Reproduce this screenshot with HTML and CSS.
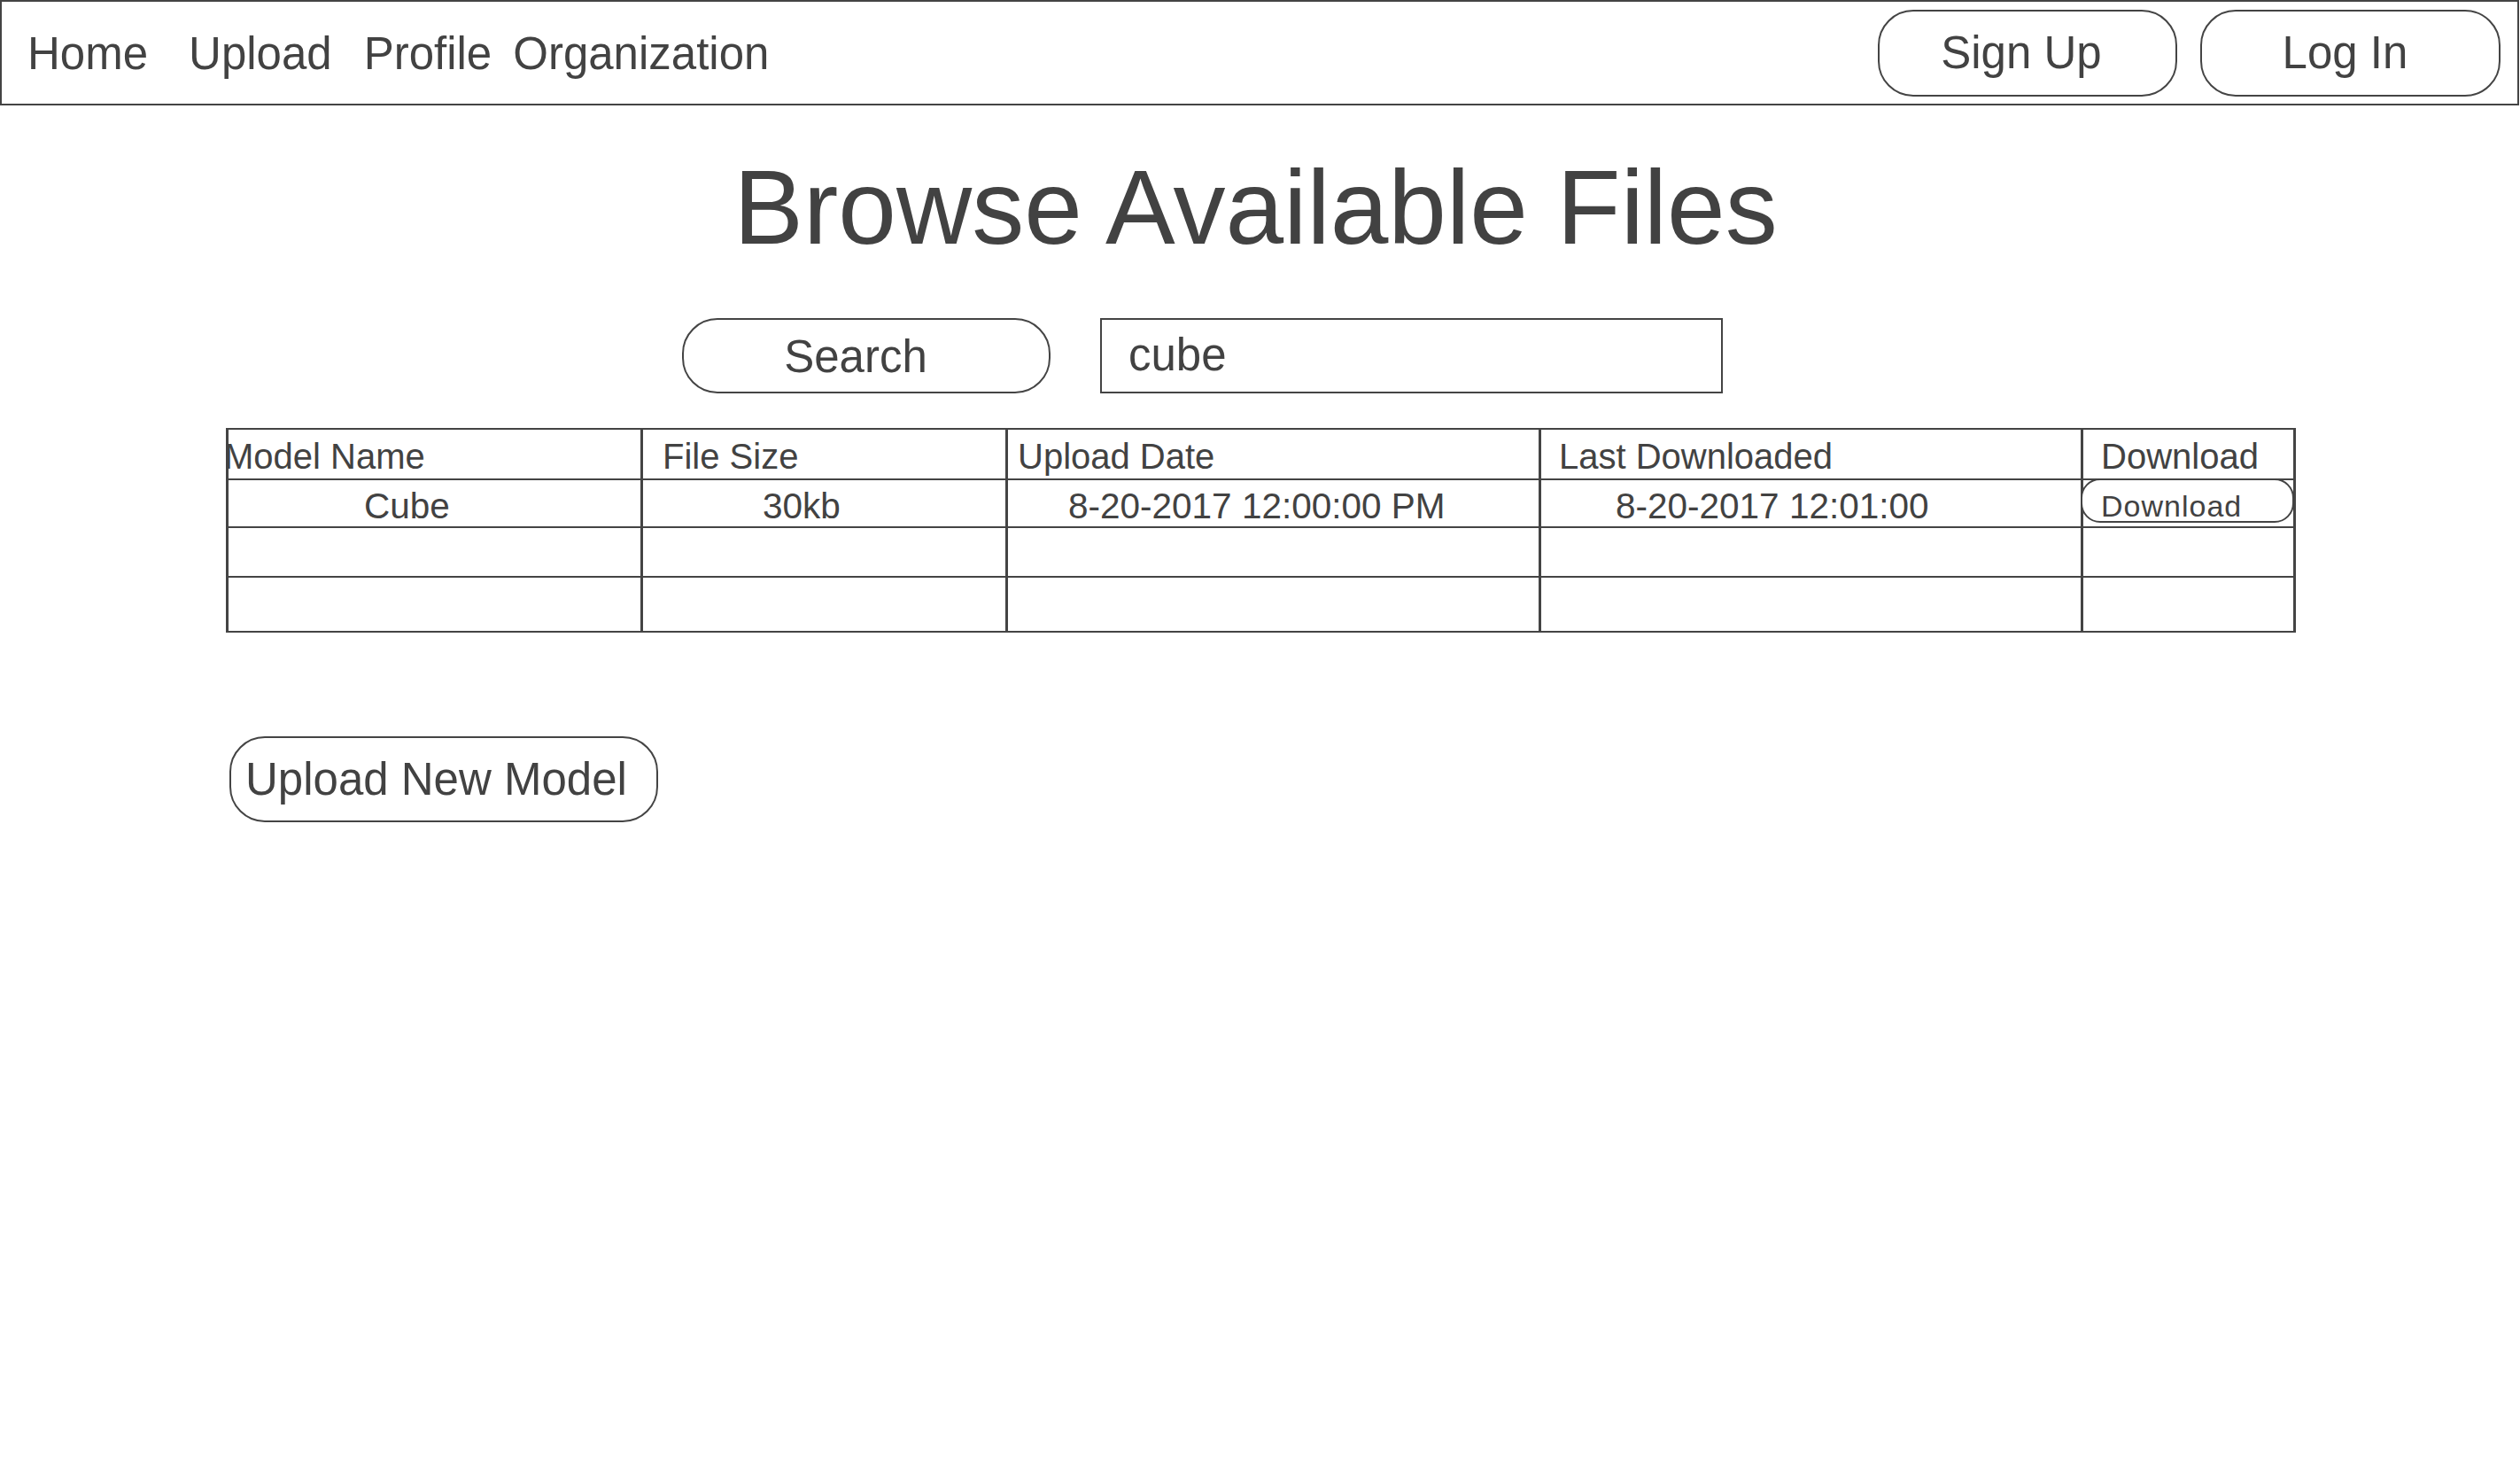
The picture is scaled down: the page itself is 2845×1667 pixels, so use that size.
FILE: index.html
```html
<!DOCTYPE html>
<html lang="en">
<head>
<meta charset="utf-8">
<title>Browse Available Files</title>
<link rel="stylesheet" href="styles.css">
</head>
<body>
<nav class="topbar">
  <div class="nav-links">
    <a class="nav-link nav-home">Home</a>
    <a class="nav-link nav-upload">Upload</a>
    <a class="nav-link nav-profile">Profile</a>
    <a class="nav-link nav-org">Organization</a>
  </div>
  <div class="nav-actions">
    <button class="pill-btn nav-btn signup">Sign Up</button>
    <button class="pill-btn nav-btn login">Log In</button>
  </div>
</nav>

<main class="page">
  <h1 class="title">Browse Available Files</h1>

  <div class="search-row">
    <button class="pill-btn search-btn">Search</button>
    <div class="search-input">cube</div>
  </div>

  <div class="files-table">
    <div class="cell head c1">Model Name</div>
    <div class="cell head c2">File Size</div>
    <div class="cell head c3">Upload Date</div>
    <div class="cell head c4">Last Downloaded</div>
    <div class="cell head c5">Download</div>

    <div class="cell data r1 d1">Cube</div>
    <div class="cell data r1 d2">30kb</div>
    <div class="cell data r1 d3">8-20-2017 12:00:00 PM</div>
    <div class="cell data r1 d4">8-20-2017 12:01:00</div>
    <div class="cell data r1 d5"><button class="dl-btn">Download</button></div>

    <div class="cell data r2"></div>
    <div class="cell data r2"></div>
    <div class="cell data r2"></div>
    <div class="cell data r2"></div>
    <div class="cell data r2"></div>

    <div class="cell data r3"></div>
    <div class="cell data r3"></div>
    <div class="cell data r3"></div>
    <div class="cell data r3"></div>
    <div class="cell data r3"></div>
  </div>

  <button class="pill-btn upload-btn">Upload New Model</button>
</main>
</body>
</html>
```

FILE: styles.css
```css
* {
  box-sizing: border-box;
}

html, body {
  margin: 0;
  padding: 0;
  background: #ffffff;
}

body {
  font-family: "Liberation Sans", Arial, sans-serif;
  color: #424242;
  width: 2845px;
}

/* ---------- top bar ---------- */
.topbar {
  width: 2844px;
  height: 119px;
  border: 2px solid #444444;
  display: flex;
  align-items: center;
  justify-content: space-between;
  padding: 0 19px 0 29px;
}

.nav-links {
  display: flex;
  align-items: center;
  padding-top: 3px;
}

.nav-link {
  font-size: 51px;
  line-height: 58px;
  color: #424242;
  text-decoration: none;
}

.nav-upload { margin-left: 46px; }
.nav-profile { margin-left: 36px; }
.nav-org { margin-left: 24px; }

.nav-actions {
  display: flex;
  gap: 26px;
  align-items: center;
}

.pill-btn {
  font-family: "Liberation Sans", Arial, sans-serif;
  color: #424242;
  background: #ffffff;
  border: 2px solid #444444;
  border-radius: 40px;
  padding: 0;
  font-size: 51px;
  line-height: 58px;
  display: flex;
  align-items: center;
  justify-content: center;
}

.nav-btn {
  height: 98px;
  margin-top: 1px;
}

.signup {
  width: 338px;
  padding-right: 14px;
}

.login {
  width: 339px;
  padding-right: 12px;
}

/* ---------- page ---------- */
.page {
  display: flex;
  flex-direction: column;
  align-items: flex-start;
}

.title {
  align-self: stretch;
  text-align: center;
  font-weight: normal;
  font-size: 118px;
  line-height: 131px;
  margin: 50px 0 0 0;
  padding-right: 10px;
  color: #424242;
}

.search-row {
  display: flex;
  align-items: center;
  gap: 56px;
  margin: 59px 0 0 770px;
}

.search-btn {
  width: 416px;
  height: 85px;
  font-size: 51px;
  padding-right: 24px;
  padding-top: 2px;
}

.search-input {
  width: 703px;
  height: 85px;
  border: 2px solid #444444;
  font-size: 51px;
  line-height: 58px;
  padding: 11px 0 0 30px;
  color: #424242;
}

/* ---------- table ---------- */
.files-table {
  display: grid;
  grid-template-columns: 468px 412px 602px 612px 240px;
  grid-template-rows: 57px 54px 56px 62px;
  border-top: 2px solid #444444;
  border-left: 3px solid #444444;
  margin: 39px 0 0 255px;
}

.cell {
  border-right: 3px solid #444444;
  border-bottom: 2px solid #444444;
  line-height: 46px;
  white-space: nowrap;
  color: #424242;
}

.head {
  font-size: 40px;
  padding-top: 7px;
}

.data {
  font-size: 40.5px;
  padding-top: 6px;
}

.c1 { padding-left: 0; text-indent: -5px; }
.c2 { padding-left: 22px; }
.c3 { padding-left: 11px; }
.c4 { padding-left: 20px; }
.c5 { padding-left: 20px; }

.d1 { padding-left: 153px; }
.d2 { padding-left: 135px; }
.d3 { padding-left: 68px; }
.d4 { padding-left: 84px; }
.d5 { padding: 0; }

.dl-btn {
  display: block;
  font-family: "Liberation Sans", Arial, sans-serif;
  font-size: 34px;
  letter-spacing: 1px;
  color: #424242;
  background: #ffffff;
  border: 2px solid #444444;
  border-radius: 22px;
  width: 241px;
  height: 50px;
  margin: -2px 0 0 -3px;
  padding: 10px 0 0 21px;
  text-align: left;
  line-height: 38px;
}

/* ---------- upload button ---------- */
.upload-btn {
  width: 484px;
  height: 97px;
  margin: 117px 0 0 259px;
  font-size: 51px;
  justify-content: flex-start;
  padding-left: 16px;
}
```
